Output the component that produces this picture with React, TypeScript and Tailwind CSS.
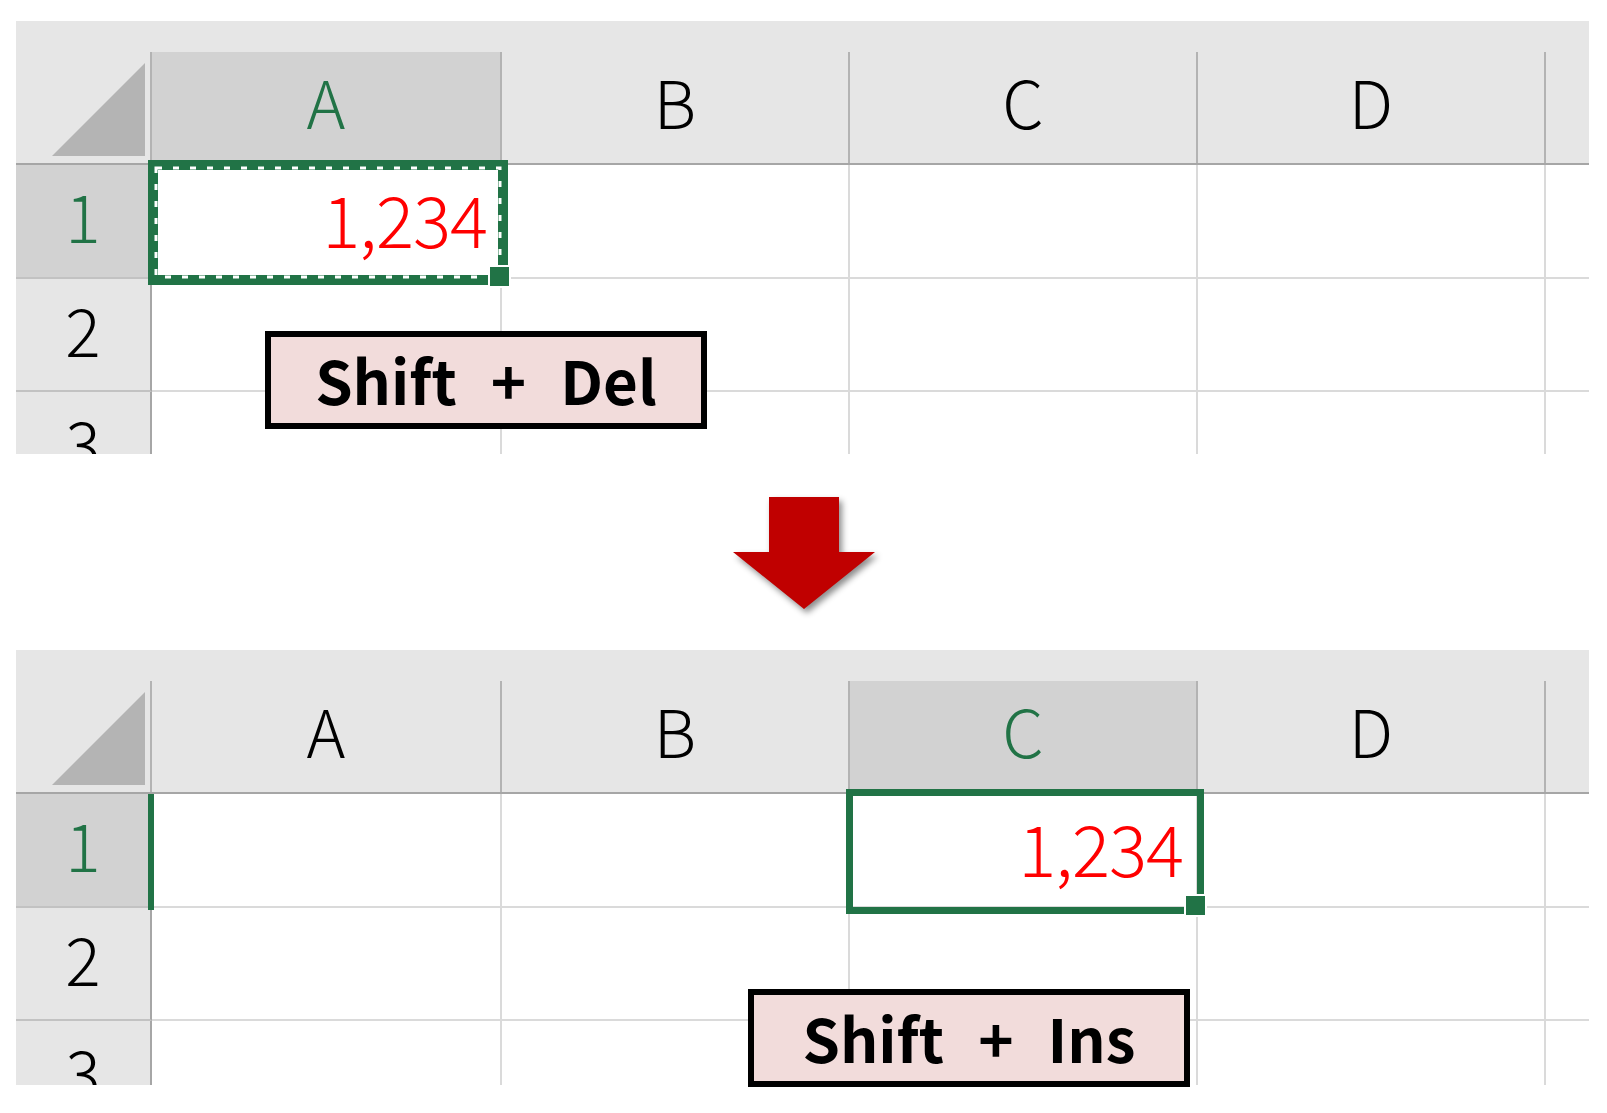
import React from 'react';

// column widths include the 2px right grid line
const COLS = [
  { label: 'A', w: 'w-[350px]' },
  { label: 'B', w: 'w-[348px]' },
  { label: 'C', w: 'w-[348px]' },
  { label: 'D', w: 'w-[348px]' },
  { label: '', w: 'w-[43px]' },
];

const ROWS = [
  { n: '1', h: 'h-[114px]' },
  { n: '2', h: 'h-[113px]' },
  { n: '3', h: 'h-[114px]' },
];

const Selection = ({ w, h, dashed }: { w: number; h: number; dashed: boolean }) => (
  <div className="pointer-events-none absolute -top-[5px] -right-[8px] -bottom-[8px] -left-[4px] z-10">
    <svg width={w} height={h} className="absolute left-0 top-0">
      {dashed ? (
        <>
          <rect x={5} y={5} width={w - 10} height={h - 10} fill="none" stroke="#217346" strokeWidth={10} />
          <rect x={8} y={8} width={w - 16} height={h - 16} fill="none" stroke="#ffffff" strokeWidth={3} strokeDasharray="6 11" />
        </>
      ) : (
        <rect x={3.5} y={3.5} width={w - 7} height={h - 7} fill="none" stroke="#217346" strokeWidth={7} />
      )}
    </svg>
    {/* fill handle */}
    <div className="absolute -right-[3px] -bottom-[3px] h-[23px] w-[23px] border-2 border-white bg-[#217346]" />
  </div>
);

const Sheet = ({ selCol, dashed, rowMarker, height }: { selCol: number; dashed: boolean; rowMarker: boolean; height: string }) => {
  return (
    <div className={`${height} w-[1573px] overflow-hidden bg-white`}>
      {/* Column headers */}
      <div className="flex h-[144px] border-b-2 border-[#a6a6a6] bg-[#e6e6e6]">
        <div className="w-[136px] pt-[31px]">
          <div className="flex h-full items-end justify-end border-r-2 border-[#b3b3b3] pb-[7px] pr-[5px]">
            <svg width="93" height="93" viewBox="0 0 93 93">
              <polygon points="93,0 93,93 0,93" fill="#b4b4b4" />
            </svg>
          </div>
        </div>
        {COLS.map((c, i) => (
          <div key={i} className={`${c.w} pt-[31px]`}>
            <div
              className={`flex h-full items-center justify-center pb-[16px] ${i < 4 ? 'border-r-2 border-[#b3b3b3]' : ''} ${
                i === selCol ? 'bg-[#d2d2d2] text-[#217346]' : 'text-black'
              }`}
            >
              <span className="text-[66px] font-light leading-none">{c.label}</span>
            </div>
          </div>
        ))}
      </div>

      {/* Rows */}
      {ROWS.map((r, ri) => (
        <div key={r.n} className={`flex ${r.h}`}>
          <div
            className={`relative flex w-[136px] items-center justify-center border-r-2 border-b-2 border-r-[#a6a6a6] border-b-[#c2c2c2] ${
              ri === 0 ? 'bg-[#d2d2d2] text-[#217346]' : 'bg-[#e6e6e6] text-black'
            }`}
          >
            <span className="pb-[14px] text-[66px] font-light leading-none">{r.n}</span>
            {ri === 0 && rowMarker && (
              <div className="absolute top-0 -right-[4px] -bottom-[4px] z-10 w-[6px] bg-[#217346]" />
            )}
          </div>
          {COLS.map((c, ci) => (
            <div
              key={ci}
              className={`relative flex ${c.w} items-center justify-end border-b-2 border-[#dadada] pr-[13px] ${ci < 4 ? 'border-r-2' : ''}`}
            >
              {ri === 0 && ci === selCol && (
                <>
                  <span className="pb-[8px] text-[71px] font-light leading-none tracking-[-1px] text-[#ff0000]">1,234</span>
                  <Selection w={ci === 0 ? 360 : 358} h={125} dashed={dashed} />
                </>
              )}
            </div>
          ))}
        </div>
      ))}
    </div>
  );
};

const Keys = ({ keys }: { keys: string[] }) => (
  <div className="flex h-[98px] w-[442px] items-center justify-center gap-[34px] border-[6px] border-black bg-[#f2dcdb] pb-[2px] text-[60px] font-bold leading-none text-black">
    {keys.map((k) => (
      <span key={k}>{k}</span>
    ))}
  </div>
);

const App = () => {
  return (
    <div className="h-[1113px] w-[1607px] overflow-hidden bg-white pl-[16px] pt-[21px] font-['Noto_Sans_CJK_JP','Noto_Sans',sans-serif]">
      {/* Before */}
      <div className="relative">
        <Sheet selCol={0} dashed rowMarker={false} height="h-[433px]" />
        <div className="absolute left-[249px] top-[310px] z-20">
          <Keys keys={['Shift', '+', 'Del']} />
        </div>
      </div>

      {/* Arrow */}
      <div className="-ml-[16px] flex h-[196px] w-[1607px] justify-center pt-[43px]">
        <svg width="142" height="112" viewBox="0 0 142 112" className="overflow-visible drop-shadow-[3px_4px_3px_rgba(0,0,0,0.45)]">
          <polygon points="36,0 106,0 106,55 142,55 71,112 0,55 36,55" fill="#c00000" />
        </svg>
      </div>

      {/* After */}
      <div className="relative">
        <Sheet selCol={2} dashed={false} rowMarker height="h-[435px]" />
        <div className="absolute left-[732px] top-[339px] z-20">
          <Keys keys={['Shift', '+', 'Ins']} />
        </div>
      </div>
    </div>
  );
};

export default App;
